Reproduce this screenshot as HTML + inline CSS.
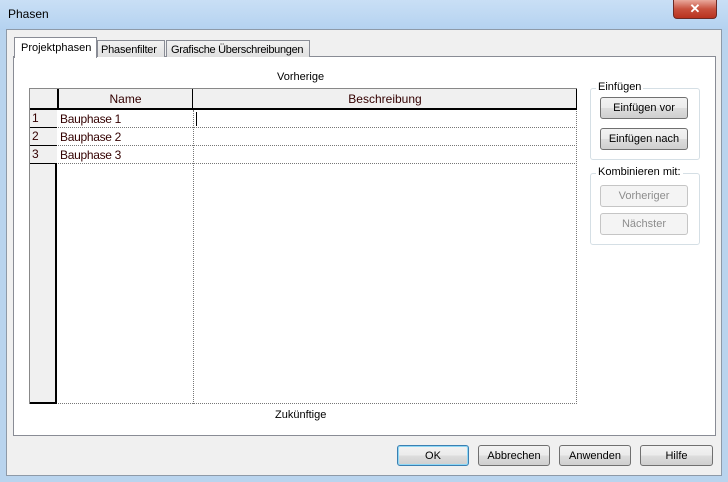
<!DOCTYPE html><html><head><style>
*{margin:0;padding:0;box-sizing:border-box}
body{width:728px;height:482px;overflow:hidden;font-family:"Liberation Sans",sans-serif;font-size:11px;position:relative;background:#b9d4ee;white-space:nowrap}
.a{position:absolute}
.btn{position:absolute;border:1px solid #707070;border-radius:3px;background:linear-gradient(#f2f2f2 0%,#ebebeb 50%,#dddddd 51%,#cfcfcf 100%);text-align:center;line-height:21px;color:#000;font-size:11px}
.dis{border-color:#c5c5c5;background:#f4f4f4;color:#8d8d8d}
.row{position:absolute;left:0;width:547px;height:18px;border-bottom:1px dotted #777}
.num{position:absolute;left:0;width:27px;height:18px;border-bottom:1px solid #000;background:#f0f0f0;padding-left:2px;line-height:17px;color:#300;font-size:12px}
</style></head><body>
<div class="a" style="left:0;top:0;width:728px;height:30px;background:linear-gradient(#c9dff5,#b4d2f0)"></div>
<div class="a" style="left:8px;top:7px;font-size:12px;color:#000">Phasen</div>
<div class="a" style="left:673px;top:0;width:44px;height:19px;border:1px solid #6b2a25;border-top:none;border-radius:0 0 4px 4px;background:linear-gradient(#e9a99c,#c8513e 50%,#b8321f);color:#fff;text-align:center;font-weight:bold;font-size:13px;line-height:18px">✕</div>
<div class="a" style="left:6px;top:29px;width:716px;height:447px;background:#f0f0f0;border:1px solid #8e9aa8"></div>
<div class="a" style="left:13px;top:56px;width:703px;height:380px;background:#fff;border:1px solid #898c95"></div>
<div class="a" style="left:14px;top:37px;width:83px;height:21px;background:#fff;border:1px solid #898c95;border-bottom:none;padding:4px 0 0 6px;color:#000">Projektphasen</div>
<div class="a" style="left:97px;top:40px;width:68px;height:17px;background:linear-gradient(#f2f2f2,#e0e0e0);border:1px solid #898c95;border-bottom:none;padding:3px 0 0 3px;letter-spacing:-0.2px">Phasenfilter</div>
<div class="a" style="left:166px;top:40px;width:144px;height:17px;background:linear-gradient(#f2f2f2,#e0e0e0);border:1px solid #898c95;border-bottom:none;padding:3px 0 0 4px;letter-spacing:-0.3px">Grafische Überschreibungen</div>
<div class="a" style="left:277px;top:71px">Vorherige</div>
<div class="a" style="left:275px;top:409px">Zukünftige</div>
<div class="a" style="left:29px;top:88px;width:548px;height:316px;border-left:1px solid #888;border-top:1px solid #888;border-right:1px dotted #777;border-bottom:1px dotted #777">
 <div class="a" style="left:0;top:0;width:547px;height:21px;background:#f0f0f0;border-bottom:2px solid #000;border-right:1px solid #000"></div>
 <div class="a" style="left:27px;top:0;width:136px;height:21px;border-left:2px solid #000;border-right:1px solid #000;text-align:center;line-height:20px;font-size:12px;color:#300">Name</div>
 <div class="a" style="left:163px;top:0;width:384px;height:21px;text-align:center;line-height:20px;font-size:12px;color:#300">Beschreibung</div>
 <div class="a" style="left:0;top:21px;width:27px;height:294px;background:#f0f0f0;border-right:2px solid #000;border-bottom:2px solid #000"></div>
 <div class="row" style="top:21px"></div><div class="row" style="top:39px"></div><div class="row" style="top:57px"></div>
 <div class="num" style="top:21px">1</div><div class="num" style="top:39px">2</div><div class="num" style="top:57px">3</div>
 <div class="a" style="left:30px;top:23px;font-size:12px;color:#300;letter-spacing:-0.3px">Bauphase 1</div>
 <div class="a" style="left:30px;top:41px;font-size:12px;color:#300;letter-spacing:-0.3px">Bauphase 2</div>
 <div class="a" style="left:30px;top:59px;font-size:12px;color:#300;letter-spacing:-0.3px">Bauphase 3</div>
 <div class="a" style="left:163px;top:21px;width:0;height:294px;border-left:1px dotted #777"></div>
 <div class="a" style="left:166px;top:23px;width:1px;height:14px;background:#000"></div>
</div>
<div class="a" style="left:590px;top:88px;width:110px;height:72px;border:1px solid #d5dfe5;border-radius:3px"></div>
<div class="a" style="left:596px;top:81px;background:#fff;padding:0 2px">Einfügen</div>
<div class="btn" style="left:600px;top:97px;width:88px;height:22px">Einfügen vor</div>
<div class="btn" style="left:600px;top:128px;width:88px;height:22px">Einfügen nach</div>
<div class="a" style="left:590px;top:173px;width:110px;height:72px;border:1px solid #d5dfe5;border-radius:3px"></div>
<div class="a" style="left:596px;top:166px;background:#fff;padding:0 2px">Kombinieren mit:</div>
<div class="btn dis" style="left:600px;top:185px;width:88px;height:22px">Vorheriger</div>
<div class="btn dis" style="left:600px;top:213px;width:88px;height:22px">Nächster</div>
<div class="btn" style="left:397px;top:445px;width:72px;height:21px;line-height:20px;border-color:#3c7fb1;box-shadow:inset 0 0 0 1px #8fd8f6">OK</div>
<div class="btn" style="left:478px;top:445px;width:72px;height:21px;line-height:20px">Abbrechen</div>
<div class="btn" style="left:559px;top:445px;width:72px;height:21px;line-height:20px">Anwenden</div>
<div class="btn" style="left:640px;top:445px;width:73px;height:21px;line-height:20px">Hilfe</div>
</body></html>
